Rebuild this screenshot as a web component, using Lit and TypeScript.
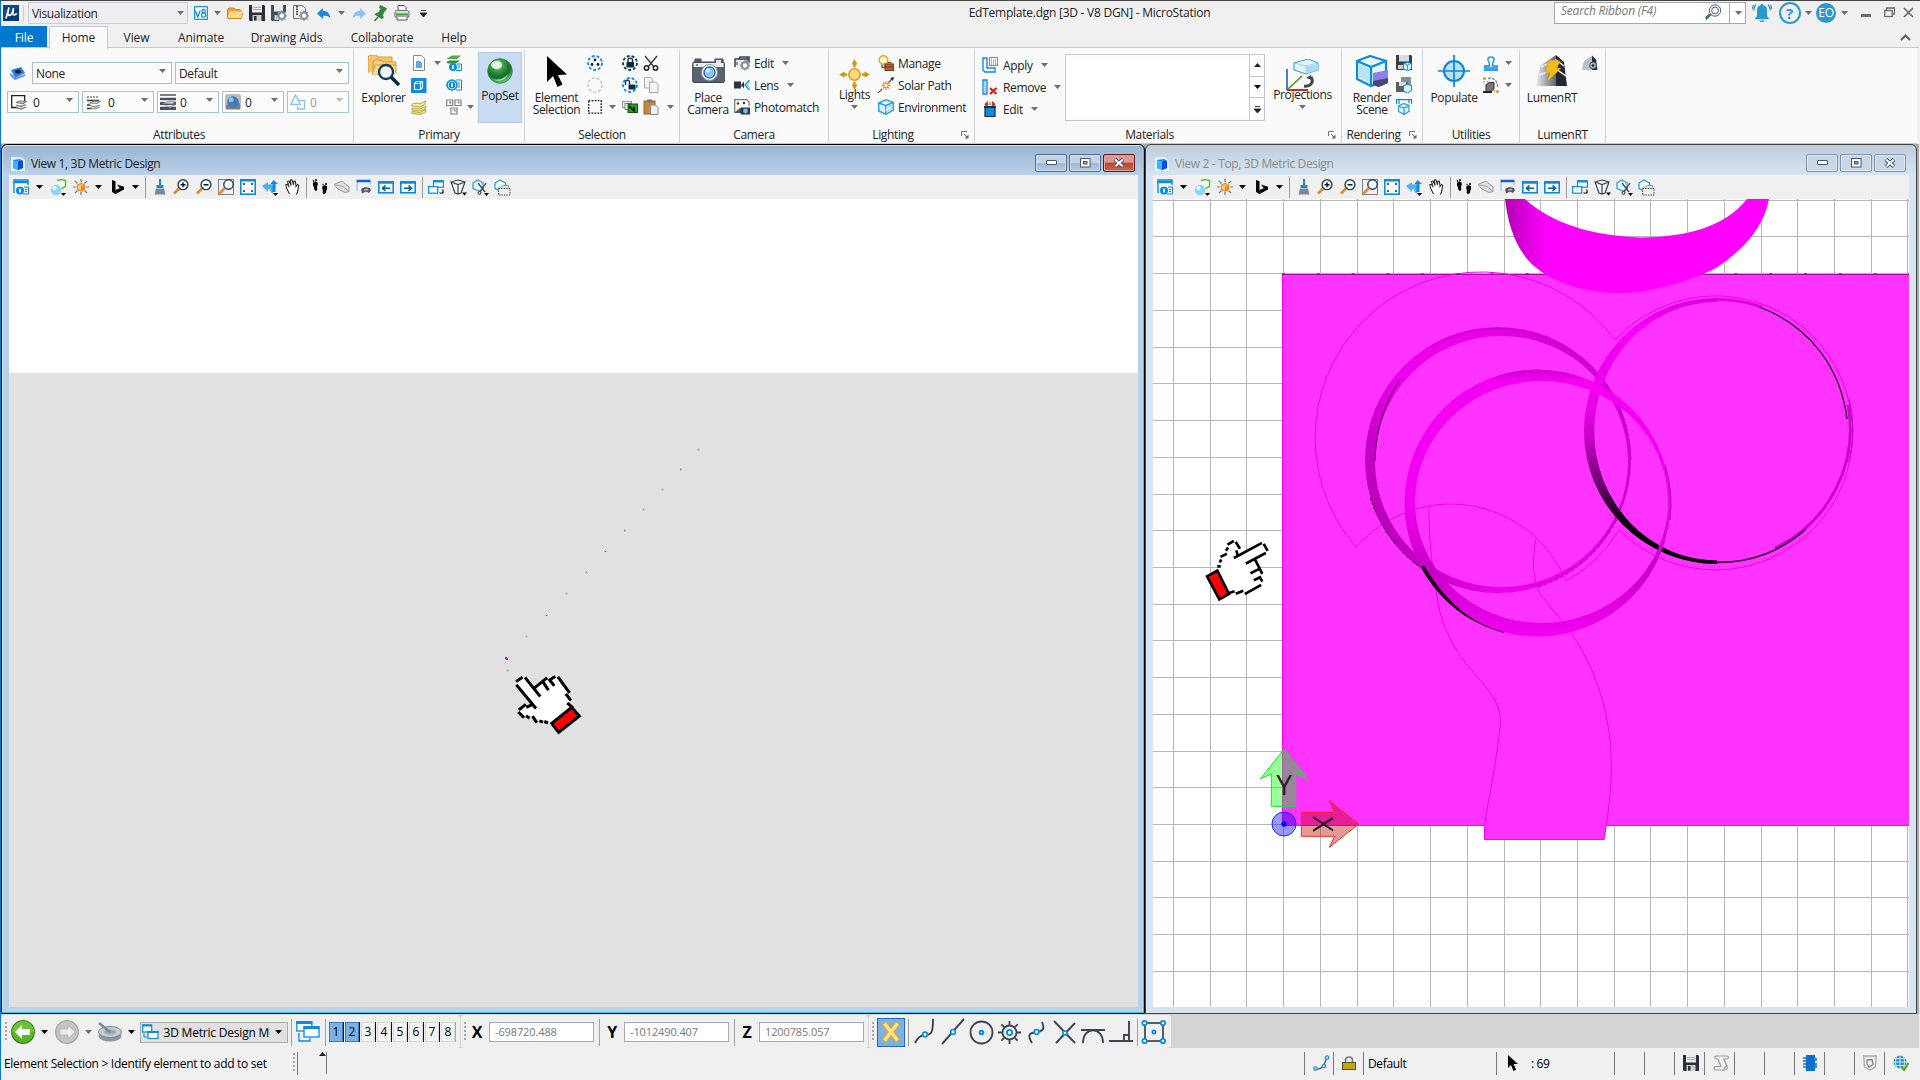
import { LitElement, html, svg, css } from "lit";
import { customElement, property } from "lit/decorators.js";

const B = "#0a8de0";
const D = "#3c4650";

/* Small icon library: [width, height, artwork] */
const ICONS: Record<string, [number, number, unknown]> = {
  logo: [16, 16, svg`<rect width="16" height="16" fill="#0b4a8a"/><path d="M0 16L16 3v13z" fill="#0d3a70"/><path d="M6 2.500L3 13.500M5.200 6c-.8 3-.2 4.300 1.500 4.300S9.500 8.500 10.500 3M10.300 5c-.8 3.500-.5 5 1 5s1.800-.8 2.300-2" fill="none" stroke="#fff" stroke-width="1.700"/>`],
  down: [7, 4, svg`<path d="M0 0h7L3.500 4z" fill="#6d6d6d"/>`],
  downB: [7, 4, svg`<path d="M0 0h7L3.500 4z" fill="#000"/>`],
  downL: [7, 4, svg`<path d="M0 0h7L3.500 4z" fill="#b8b8b8"/>`],
  up: [7, 4, svg`<path d="M0 4h7L3.500 0z" fill="#222"/>`],
  more: [7, 7, svg`<path d="M1 .5h5M0 3h7L3.500 7z" stroke="#222" fill="#222" stroke-width=".9"/>`],
  v8: [14, 14, svg`<rect x=".7" y=".7" width="12.600" height="12.600" fill="#fff" stroke="${B}" stroke-width="1.200"/><path d="M1.500 5l2.300 6 2.400-6.500" fill="none" stroke="${B}" stroke-width="1.300"/><circle cx="9.600" cy="5" r="1.700" fill="none" stroke="${B}" stroke-width="1.200"/><circle cx="9.600" cy="9" r="2.100" fill="none" stroke="${B}" stroke-width="1.200"/>`],
  folder: [16, 12, svg`<path d="M.5 11V2.500L2 1h5l1.500 1.500H13L14 4v1l1.500 1-1 5.500H1z" fill="#e3a93c" stroke="#c98a1e"/><path d="M2.500 4.500h13l-1.200 6.500H1z" fill="#fbd98a"/>`],
  save: [16, 16, svg`<path d="M0 0h15l1 1v15H1l-1-1z" fill="#2a2d33"/><rect x="3" y="0" width="10" height="7.500" fill="#e9ebee"/><path d="M4 2.500h8M4 4.500h8" stroke="#aab"/><rect x="3.500" y="10" width="9" height="6" fill="#c9ccd1"/><rect x="5" y="11" width="2.500" height="4.500" fill="#2a2d33"/>`],
  saveSet: [16, 16, svg`<path d="M0 0h15v7H8v9H1l-1-1z" fill="#4a4d53"/><rect x="3" y="0" width="9" height="6.500" fill="#e9ebee"/><rect x="3.500" y="10" width="5" height="5" fill="#c9ccd1"/><circle cx="10.800" cy="10.800" r="3.200" fill="#fff" stroke="#8090a3" stroke-width="2"/><path d="M10.800 5.500v10.500M5.500 10.800H16M7 7l7.600 7.600M14.600 7L7 14.600" stroke="#8090a3" stroke-width="1.300" stroke-dasharray="2.200 6.500"/>`],
  zip: [16, 16, svg`<path d="M.5.500h9l3 3v4M.5.500v13h6" fill="none" stroke="#6b6f77"/><path d="M4 1v9" stroke="#444" stroke-width="2" stroke-dasharray="1.500 1"/><circle cx="11" cy="10.800" r="3.200" fill="#fff" stroke="#8090a3" stroke-width="2"/><path d="M11 5.500v10.500M5.700 10.800H16M7.200 7l7.600 7.600M14.800 7l-7.600 7.600" stroke="#8090a3" stroke-width="1.300" stroke-dasharray="2.200 6.500"/>`],
  undo: [14, 11, svg`<path d="M0 5.500L6 0v3c4 0 6.500 1.500 7.500 7.500C11.500 8 9.500 7.500 6 8v3z" fill="#1b87dd"/>`],
  redo: [14, 11, svg`<path d="M14 5.500L8 0v3C4 3 1.500 4.500.5 10.500 2.500 8 4.500 7.500 8 8v3z" fill="#8cc4ea"/>`],
  pin: [14, 16, svg`<path d="M6 .5l6.500 3-1 2-1 .2-2 4.500.8 2-1.200 1.500L1 9.500l1.300-1.300 2-.2L7 4 5.700 2.500z" fill="#2f8a3c" stroke="#1f6a2c" stroke-width=".7"/><path d="M4 12l-3.500 4" stroke="#555" stroke-width="1.300"/>`],
  print: [16, 16, svg`<path d="M4 6V.5h6l2 2V6" fill="#fff" stroke="#555"/><path d="M1 7l1.500-1.500h11L15 7v5H1z" fill="#dcdfe3" stroke="#6b6f77"/><path d="M2 9.500h12" stroke="#3aa53a" stroke-width="2.200"/><path d="M3 12v3h10v-3" fill="#fff" stroke="#555"/>`],
  search: [17, 17, svg`<circle cx="10" cy="6.500" r="5.700" fill="none" stroke="#34607c"/><circle cx="10" cy="6.500" r="3.400" fill="none" stroke="#34607c"/><path d="M6 10.500L1 15.500M4.500 10L.5 14" stroke="#34607c" stroke-width="1.300"/>`],
  bell: [20, 20, svg`<path d="M10 1c1 0 1.500.5 1.500 1.200 2.500.8 3.500 2.500 3.500 5V13l2 2.500v.8H3v-.8L5 13V7.200c0-2.500 1-4.200 3.500-5C8.500 1.500 9 1 10 1zM7.500 17.500h5c-.5 2-4.500 2-5 0z" fill="#2b98d0"/><path d="M4 1.500C2.500 3 1.700 5 1.700 7.500M16 1.500c1.500 1.500 2.300 3.500 2.300 6M1.500 2C.7 3.500.5 5 .5 6M18.500 2c.8 1.500 1 3 1 4" fill="none" stroke="#2b98d0" stroke-width="1.200"/>`],
  min: [11, 10, svg`<rect y="6" width="10" height="3" fill="#6b6b6b"/>`],
  restore: [11, 11, svg`<path d="M2.500 3V1h8v6H8.500" fill="none" stroke="#6b6b6b" stroke-width="1.300"/><rect x=".7" y="3.500" width="7.500" height="6" fill="none" stroke="#6b6b6b" stroke-width="1.300"/>`],
  close: [11, 11, svg`<path d="M1 1l9 9M10 1l-9 9" stroke="#6b6b6b" stroke-width="1.700"/>`],
  chev: [11, 7, svg`<path d="M1 6l4.500-4.500L10 6" fill="none" stroke="#666" stroke-width="2.200"/>`],
  level: [16, 14, svg`<path d="M1 4l10-3 4 6-10 5z" fill="#2f7fe0"/><path d="M0 8l5 5 10-4" fill="none" stroke="#4a90e0" stroke-width="1.800"/><ellipse cx="8" cy="5.500" rx="3" ry="2" fill="#10204a"/>`],
  color: [16, 16, svg`<path d="M7 13.500H.7V1.700h13V7" fill="#fff" stroke="#222" stroke-width="1.300"/><path d="M5 8.500l4-1.500 6 .5-3 2zM5 11l5 1.500 5-2M5 13.500l5 1.500 5-2" fill="#ddd" stroke="#777" stroke-width="1.200"/>`],
  style: [16, 16, svg`<path d="M1 3h11" stroke="#444" stroke-dasharray="2 1"/><path d="M1 6.500h12M1 14.500h5M1 11h3" stroke="#333" stroke-width="1.300"/><path d="M4 9l4-2 6 .5-3 2zM4 11.500l5 1.500 5-2M4 14l5 1 5-2" fill="#ddd" stroke="#888" stroke-width="1.200"/>`],
  weight: [16, 16, svg`<path d="M0 1h16" stroke="#4a5460" stroke-width="1.500"/><path d="M0 5h16" stroke="#4a5460" stroke-width="2.500"/><path d="M0 9.500h16" stroke="#4a5460" stroke-width="3"/><path d="M0 14.500h16" stroke="#4a5460" stroke-width="3.500"/><path d="M5 9l4-2 6 .5-3 2zM5 11.500l5 1.500 5-2" fill="#ddd" stroke="#aaa" stroke-width="1.300"/>`],
  mat: [16, 16, svg`<rect width="16" height="16" rx="2" fill="#b9bdc2"/><path d="M1 11l14-2v6H1z" fill="#7a8088"/><circle cx="8" cy="8" r="5.800" fill="#3f7fb8"/><circle cx="6.200" cy="5.800" r="2.500" fill="#8fc0e6"/>`],
  prio: [16, 16, svg`<path d="M5.500 1L.8 10.500h9.500z" fill="none" stroke="#8cc4ea" stroke-width="1.400"/><path d="M7 6.500h7.500V15h-7v-3" fill="none" stroke="#8cc4ea" stroke-width="1.300"/>`],
  explorer: [32, 32, svg`<path d="M0 18V2l2-2h6l2 2h14v6" fill="#f5c56b" stroke="#d49a35"/><path d="M5 20V7l2-2h6l2 2h13l-1 11z" fill="#f9cf7f" stroke="#d49a35"/><path d="M4 20L7 10h21v8" fill="#fbdb98" stroke="#d49a35"/><circle cx="18" cy="17" r="7" fill="#f4f6fa" stroke="#103c5c" stroke-width="2.300"/><path d="M23 22l8 8" stroke="#0c2c44" stroke-width="3.500"/>`],
  doc: [16, 16, svg`<path d="M2.500.500h8l3 3v12h-11z" fill="#fff" stroke="#888"/><path d="M5 6h4l2 2v5H5z" fill="#5ba9e0"/>`],
  cube: [16, 15, svg`<rect width="15.500" height="15" rx="1" fill="#0a8de0"/><path d="M3.500 5.500h6v6h-6zM3.500 5.500l2-2h6v6l-2 2M9.500 5.500l2-2" fill="none" stroke="#fff" stroke-width="1.100"/>`],
  layers: [16, 15, svg`<path d="M1 4l4-1 3 1 7-3-2 4-4 2-8-1z" fill="#fbf09a" stroke="#a89a3a" stroke-width=".9"/><path d="M1 8l8 1 6-3-1 3-5 2-8-1zM1 11.500l8 1 6-3-1 3-5 2-8-1z" fill="#fbf09a" stroke="#a89a3a" stroke-width=".9"/>`],
  levinfo: [16, 16, svg`<path d="M0 4l6-3.500h9L11 4z" fill="#4aae4a"/><path d="M0 7l4-1.500h10L10 8.500H2z" fill="#388a38"/><circle cx="7" cy="12" r="4" fill="${B}"/><path d="M7 10v4" stroke="#fff" stroke-width="1.600"/><path d="M11 9h4.500v6.500H10M12 11h2M12 13h2" fill="none" stroke="${B}"/>`],
  info: [16, 14, svg`<circle cx="6" cy="7" r="5" fill="none" stroke="${B}" stroke-width="1.600"/><circle cx="6" cy="7" r="3.400" fill="${B}"/><path d="M6 5v4" stroke="#fff" stroke-width="1.500"/><path d="M10 2h5.500v10H10M12 5h2M12 7h2M12 9h2" fill="none" stroke="${B}"/>`],
  keys: [16, 16, svg`<path d="M.7 1h6v5.500h-6zM9 1h6v5.500H9zM5 9h6v6H5z" fill="#fff" stroke="#7a828c" stroke-width="1.200"/><path d="M3 3h1.500v1.500M11.500 3H13v1.500M7.500 11H9v1.500" fill="none" stroke="#555"/>`],
  sphere: [26, 26, svg`<defs><radialGradient id="g" cx=".4" cy=".25" r=".8"><stop offset="0" stop-color="#e8f8e8"/><stop offset=".3" stop-color="#3aa04a"/><stop offset=".65" stop-color="#136a2a"/><stop offset="1" stop-color="#7be08a"/></radialGradient></defs><circle cx="13" cy="13" r="12.300" fill="url(#g)" stroke="#1e8a34" stroke-width=".8"/><ellipse cx="9.500" cy="7" rx="5.500" ry="4" fill="#fff" opacity=".75"/><path d="M6 21c6 4 13 1 15-5-3 4-9 7-15 5z" fill="#c8f7c8" opacity=".8"/>`],
  arrowBig: [20, 31, svg`<path d="M0 0v26l6-6 4.500 11 5-2.500L11 19l9-.5z"/>`],
  selAll: [16, 16, svg`<circle cx="8" cy="8" r="7" fill="none" stroke="${B}" stroke-width="1.800" stroke-dasharray="3 1.900"/><circle cx="8" cy="5" r="1.400" fill="#0c2c44"/><circle cx="5" cy="9.500" r="1.400" fill="#0c2c44"/><circle cx="11" cy="9.500" r="1.400" fill="#0c2c44"/>`],
  selNone: [16, 16, svg`<circle cx="8" cy="8" r="7" fill="none" stroke="#b4bcc4" stroke-width="1.200" stroke-dasharray="3 1.900"/>`],
  marquee: [14, 14, svg`<rect x=".7" y=".7" width="12.500" height="12.500" fill="none" stroke="#111" stroke-width="1.300" stroke-dasharray="1.700 1.300"/>`],
  lockSel: [16, 16, svg`<circle cx="8" cy="8" r="7" fill="none" stroke="#0c3c5c" stroke-width="1.800" stroke-dasharray="3 1.900"/><rect x="4.500" y="7" width="7.500" height="5.500" fill="#0c2c44"/><path d="M6 7.500V5c0-2.500 4.500-2.500 4.500 0v2.500" fill="none" stroke="#0c2c44" stroke-width="1.400"/>`],
  unlockSel: [16, 16, svg`<circle cx="8" cy="8" r="7" fill="none" stroke="${B}" stroke-width="1.800" stroke-dasharray="3 1.900"/><rect x="6.500" y="7.500" width="7" height="5" fill="#0c2c44"/><path d="M3.500 8V5c0-2.500 4-2.500 4 0v2.500" fill="none" stroke="#0c2c44" stroke-width="1.400"/>`],
  replace: [16, 12, svg`<rect x=".5" y=".5" width="9" height="6" fill="#eee" stroke="#999"/><rect x="3" y="2.500" width="6" height="6" fill="#fff" stroke="#4a4"/><rect x="6" y="3" width="9.500" height="8.500" fill="#1fa01f" stroke="#0a5a0a"/><path d="M7 5l5 5V6" stroke="#000" stroke-width="1.500" fill="none"/>`],
  cut: [16, 16, svg`<path d="M2 1l9 11M14 1L5 12" stroke="#333" stroke-width="1.300"/><circle cx="3.500" cy="13" r="2.200" fill="none" stroke="#222" stroke-width="1.500"/><circle cx="12.500" cy="13" r="2.200" fill="none" stroke="#222" stroke-width="1.500"/>`],
  copy: [16, 16, svg`<path d="M1.500.500h6l2 2V11h-8z" fill="#f4f4f4" stroke="#aaa"/><path d="M6.500 5h6l2.500 2.500v8H6.500z" fill="#f4f4f4" stroke="#aaa"/>`],
  paste: [16, 16, svg`<rect x="1" y="2" width="11" height="13" fill="#c4883c" stroke="#9a6420"/><rect x="4" y=".5" width="5" height="3" fill="#777"/><path d="M7.500 6h5l2.500 2.500v7H7.500z" fill="#f0f0f0" stroke="#888"/>`],
  camera: [33, 26, svg`<path d="M3 4V1h6v3M23 4V1h8v4" fill="#5a626c" stroke="#404850"/><rect x=".7" y="4" width="31.600" height="20.500" rx="1.500" fill="#5b636e" stroke="#3c444c"/><path d="M1.500 5h30v4h-30z" fill="#e8eaec"/><rect x="24" y="2" width="5" height="3" fill="#dfe6ee"/><rect x="4" y="6" width="2" height="2" fill="#6ab04a"/><circle cx="17.500" cy="14.500" r="8" fill="#eef1f4" stroke="#8a929a"/><circle cx="17.500" cy="14.500" r="5.500" fill="#8dc8f0" stroke="#2c6ca0" stroke-width="1.300"/><circle cx="15.800" cy="12.500" r="2" fill="#dff1ff"/>`],
  camEdit: [16, 16, svg`<path d="M1 12V4h4L6 2h9v6M1 4h14" fill="#e8eaec" stroke="#3c444c" stroke-width="1.500"/><path d="M3 7v3M13 2v5" stroke="#3c444c"/><circle cx="11" cy="10.500" r="3.200" fill="#fff" stroke="#8090a3" stroke-width="2"/><path d="M11 5v11M6 10.500h10M7.500 7l7 7M14.500 7l-7 7" stroke="#8090a3" stroke-width="1.300" stroke-dasharray="2.200 6"/>`],
  lens: [16, 10, svg`<path d="M0 1.500h7v7H0z" fill="#2c343c"/><path d="M7 5l3-3.500v7z" fill="#2c343c"/><path d="M15.500 0L11 5l4.500 5" fill="none" stroke="${B}" stroke-width="1.300"/><path d="M15.500 2.500L13 5l2.500 2.500" fill="none" stroke="#8cc4ea"/>`],
  photo: [16, 16, svg`<path d="M.7 14V.7h12L15 3v4" fill="#fff" stroke="#6b7480" stroke-width="1.200"/><path d="M1 13l5-4 3 2v3H1z" fill="#555"/><circle cx="4" cy="4.500" r="1.200" fill="#333"/><circle cx="10" cy="4" r="1.200" fill="#333"/><rect x="6.500" y="8.500" width="9.500" height="7" fill="#2c3a48"/><circle cx="11.500" cy="12" r="2.400" fill="#6fc0f0"/>`],
  lights: [31, 31, svg`<path d="M15.500 4v23M4 15.500h23" stroke="#cf9410" stroke-width="2.400"/><path d="M15.500 0l3 5.500h-6zM15.500 31l3-5.500h-6zM0 15.500l5.500-3v6zM31 15.500l-5.500-3v6z" fill="#cf9410"/><circle cx="15.500" cy="15.500" r="7.500" fill="#fafafa"/><circle cx="15.500" cy="15.500" r="5.700" fill="#fbd97a" stroke="#d49a2a" stroke-width="1.500"/>`],
  manage: [16, 16, svg`<circle cx="5.500" cy="5" r="4.300" fill="#fff7d0" stroke="#e0ad20" stroke-width="1.600"/><path d="M4 9.500v3h3v-3" fill="none" stroke="#555" stroke-width="1.300"/><rect x="7" y="9" width="9" height="6.500" fill="#b0623a" stroke="#7a3a1a"/><path d="M10 9V7.500h3V9M7 12h9" fill="none" stroke="#7a3a1a"/>`],
  solar: [16, 16, svg`<path d="M0 16L4 12M10 6l5-5" stroke="#555" stroke-width="1.200"/><path d="M16 0l-4 1 3 3z" fill="#333"/><path d="M8 4v9M3.500 8.500h9M5 5.500l6 6M11 5.500l-6 6" stroke="#f08a2a" stroke-width="1.300"/><circle cx="8" cy="8.500" r="1.500" fill="#fff"/>`],
  env: [16, 16, svg`<path d="M.7 4L8 .7 15.300 3.500V11L8 15.300.7 12zM.7 4l7 2.500 7.600-3M7.700 6.500v8.500" fill="#d9f0fd" stroke="#28a0dc" stroke-width="1.400"/><path d="M8 9l5-3v4l-5 3z" fill="#f4fbff" stroke="#7cc4ea" stroke-width=".8"/>`],
  launcher: [8, 8, svg`<path d="M.5 5V.500H6" fill="none" stroke="#777"/><path d="M3 3l3 3" stroke="#666"/><path d="M7.500 3.500v4h-4z" fill="#666"/>`],
  apply: [16, 16, svg`<path d="M1 1h4v10h8v4H3L1 13z" fill="#fff" stroke="${B}" stroke-width="1.400"/><rect x="7.500" y=".5" width="8" height="8" fill="#fff" stroke="#888"/><path d="M9 3h5M9 5h5M9 7h5" stroke="#666" stroke-dasharray="1 1"/>`],
  remove: [16, 16, svg`<path d="M1 1h4v14H1z" fill="#d6ecfb" stroke="${B}" stroke-width="1.300"/><path d="M3 2v12" stroke="${B}" stroke-dasharray="1 1.500"/><path d="M8 9l6.500 6M14.500 9L8 15" stroke="#d82020" stroke-width="2.300"/>`],
  brushes: [16, 16, svg`<path d="M3 4l2-2v3M11 5V2l2 2" stroke="#c03020" stroke-width="1.800" fill="none"/><path d="M8 0l1.500 4h-3z" fill="#f08a2a"/><path d="M3 6h10v9.500H3z" fill="${B}" stroke="#1c2c3c" stroke-width="1.200"/><path d="M2 6h12" stroke="#1c2c3c" stroke-width="2"/>`],
  proj: [34, 32, svg`<path d="M8 4l14-4 10 4v7l-12 4-12-4z" fill="#e6f5fd" stroke="#28a0dc"/><path d="M8 4l12 3 12-3M20 7v8" fill="none" stroke="#28a0dc" opacity=".4"/><path d="M20 8l12-3v6l-12 4z" fill="#a8daf5"/><path d="M1 10v21" stroke="#1465b4" stroke-width="1.600"/><path d="M1 31h21" stroke="#c81414" stroke-width="1.800"/><path d="M2 30l14-13" stroke="#4a9a1a" stroke-width="1.600"/><path d="M18 27c7 1 10-4 7-9" fill="none" stroke="#3c444c" stroke-width="3"/><path d="M20 19l5-3 1 5z" fill="#3c444c"/>`],
  render: [32, 32, svg`<path d="M1 6L14 1l16 5v19L15 31 1 24z" fill="#e8f5fd" stroke="${B}" stroke-width="2.300"/><path d="M1 6l14 6 15-6M15 12v19" fill="none" stroke="${B}" stroke-width="2.300"/><path d="M3 9l10 4.500v14L3 22z" fill="#b8e2f8"/><path d="M17 18l15-3v13l-10 4-5-2z" fill="#8a80e8"/><path d="M17 26l15-3v5l-9 4-6-2z" fill="#4a4478"/>`],
  saveImg: [16, 16, svg`<path d="M0 0h15l1 1v14H1l-1-1z" fill="#3a3d43"/><rect x="3" y="0" width="10" height="6.500" fill="#d9dbde"/><rect x="2" y="10" width="5" height="4" fill="#c9ccd1"/><path d="M7.500 8.500l4-1 4 1v5l-4 2.500-4-2z" fill="#d9f0fd" stroke="${B}"/><path d="M7.500 8.500l4 1.500 4-1.500M11.500 10v5" stroke="${B}" fill="none" stroke-width=".8"/>`],
  saveImgs: [16, 16, svg`<path d="M5 0h10v9H5z" fill="#8a8d93"/><path d="M0 5h12v10H0z" fill="#5a5d63"/><rect x="3" y="5" width="7" height="4" fill="#d9dbde"/><path d="M7.500 8.500l4-1 4 1v5l-4 2.500-4-2z" fill="#d9f0fd" stroke="${B}"/>`],
  renderBox: [16, 16, svg`<path d="M.5 5V.700h15V5M3 1v4M13 1v3" fill="none" stroke="${B}" stroke-width="1.200"/><path d="M2.500 7l5-2.500L13 6.500v6L8 15.500l-5.500-3zM2.500 7L8 9l5-2.500M8 9v6" fill="#d9f0fd" stroke="#28a0dc" stroke-width="1.200"/>`],
  target: [32, 32, svg`<circle cx="16" cy="16" r="10" fill="#b8e0f8" stroke="#0a85d8" stroke-width="2"/><path d="M16 0v32M0 16h32" stroke="#0a85d8" stroke-width="1.700"/>`],
  stamp: [14, 15, svg`<path d="M7 .8c4 0 3.500 4 2 5.500L8.500 10h4.700v2H.8v-2h4.700L5 6.300C3.500 4.800 3 .8 7 .8z" fill="#f2fafe" stroke="${B}" stroke-width="1.300"/><path d="M0 14h14" stroke="${B}" stroke-width="1.700"/>`],
  xform: [16, 16, svg`<path d="M5 1.500c6-1.500 10 3 9.500 9" fill="none" stroke="#888" stroke-width="1.300" stroke-dasharray="3 1"/><path d="M3 8l3-2.500h5V12l-3 2.500H3z" fill="#777" stroke="#333"/><path d="M0 15h9" stroke="#222" stroke-width="2"/><circle cx="1.500" cy="1.500" r="1.500" fill="#f08a2a"/><circle cx="14.500" cy="14.500" r="1.500" fill="#f08a2a"/><path d="M1 4v3M4 5h3M11 14h2" stroke="#f08a2a" stroke-width="1.300" stroke-dasharray="1.500 1"/>`],
  lumen: [32, 32, svg`<defs><linearGradient id="lg" x1="0" x2="1"><stop offset="0" stop-color="#e9ecef"/><stop offset="1" stop-color="#5a6672"/></linearGradient></defs><path d="M4 11L20 0v31H0z" fill="url(#lg)"/><path d="M20 0l8 7 3 24H20z" fill="#252a30"/><path d="M5 12l15-7 8 6M3 20l17-6 10 7" fill="none" stroke="#fff" stroke-width="1.300"/><path d="M13 5l11 1-3 7h4L11 27l3-9-5-1z" fill="#f2bd1c" stroke="#c8920a" stroke-width=".6"/>`],
  lumenS: [16, 16, svg`<path d="M2 6l8-5.500V15H0z" fill="#b9c0c8"/><path d="M10 .5l4 4 1.500 10.500H10z" fill="#252a30"/><circle cx="11" cy="10.500" r="3.400" fill="#aab4be" stroke="#4a5560"/><circle cx="11" cy="10.500" r="1.300" fill="#223"/>`],
  view: [14, 15, svg`<path d="M0 1h10l4 3v11H0z" fill="#dff0fb"/><path d="M2 4l7-1 3 2v7l-5 2-5-2z" fill="#1a8af0"/><path d="M2 4l5 1.500V14l-5-2z" fill="#3ab4ff"/><path d="M7 5.500l5-1v7.500L7 14z" fill="#0a4ae0"/>`],
  vinfo: [16, 16, svg`<path d="M1 14V1h14v5" fill="#fff" stroke="${B}" stroke-width="1.400"/><path d="M.5 3h15" stroke="${B}" stroke-width="2.500"/><circle cx="7" cy="11.500" r="4" fill="${B}"/><path d="M7 9.500v4" stroke="#fff" stroke-width="1.600"/><path d="M11 8h4.500v7H10M12 10.500h2M12 12.500h2" fill="none" stroke="${B}"/>`],
  display: [17, 17, svg`<path d="M7 1.500l4-1 4.500 1v6l-4 2" fill="#f4fff0" stroke="#5ac02a" stroke-width="1.400"/><circle cx="6" cy="11" r="5.300" fill="#8ed4f4"/><circle cx="4.500" cy="9" r="2.200" fill="#e8f8ff"/><path d="M11 14h5l-2.500 3z" fill="#000"/>`],
  sun: [16, 16, svg`<path d="M8 0v3M8 13v3M0 8h3M13 8h3M2 2l2.500 2.500M14 2l-2.500 2.500M2 14l2.500-2.500M14 14l-2.500-2.500" stroke="#777" stroke-width="1.200"/><path d="M4.500 6L8 4.500 11.500 6v4.500L8 12l-3.500-1.500z" fill="#fbc98a" stroke="#f08a1a" stroke-width="1.200"/><path d="M8 7.500L11.500 6v4.500L8 12z" fill="#f08a1a"/>`],
  bing: [12, 14, svg`<path d="M0 0l3.500 1.300V10L12 6.500v3L3.500 14 0 12zM5 4.500l7 2.300-4 1.700z"/>`],
  brush: [12, 16, svg`<path d="M6 0v6" stroke="#1e88d2" stroke-width="2"/><path d="M2.500 6h7v3h-7z" fill="#1e88d2"/><path d="M2 9.500h8l1.500 6H.5z" fill="#7b8794"/>`],
  zin: [16, 16, svg`<path d="M6 9.500L1 14.500" stroke="#e08a2a" stroke-width="2.600"/><circle cx="10" cy="5.700" r="4.900" fill="#fff" stroke="#1c4058" stroke-width="1.400"/><path d="M7.500 5.700h5M10 3.200v5" stroke="#111" stroke-width="1.400"/>`],
  zout: [16, 16, svg`<path d="M6 9.500L1 14.500" stroke="#e08a2a" stroke-width="2.600"/><circle cx="10" cy="5.700" r="4.900" fill="#fff" stroke="#1c4058" stroke-width="1.400"/><path d="M7.500 5.700h5" stroke="#111" stroke-width="1.400"/>`],
  zwin: [16, 16, svg`<rect x=".5" y=".5" width="15" height="15" fill="none" stroke="#111" stroke-dasharray="1 1"/><path d="M6.500 9.500l-5 5" stroke="#e08a2a" stroke-width="2.600"/><circle cx="10.500" cy="5.500" r="4.700" fill="#fff" stroke="#1c4058" stroke-width="1.400"/>`],
  fit: [16, 16, svg`<rect x=".8" y=".8" width="14.400" height="14.400" fill="#fff" stroke="${B}" stroke-width="1.600"/><path d="M0 1.500h16" stroke="${B}" stroke-width="2"/><circle cx="4" cy="5" r="1.100" fill="#28384a"/><circle cx="12" cy="5" r="1.100" fill="#28384a"/><circle cx="4" cy="12" r="1.100" fill="#28384a"/><circle cx="12" cy="12" r="1.100" fill="#28384a"/>`],
  rotate: [17, 17, svg`<path d="M0 7l6-4v2.500c4-1 7 0 8 3L11 9v6l-3-3v-2c-1 0-1 0-2 .5V13z" fill="#56b0e8"/><path d="M11.500 1L16 5h-2.500v8h-3V5H8.500z" fill="${B}"/><path d="M11 14h5l-2.500 3z" fill="#000"/>`],
  hand: [15, 16, svg`<path d="M4.500 15L1.500 9 .8 5.500l1.500-.2L4 8 2.500 2.500 4 2l2 4.500L5.500 1 7 .8 8.500 6 9 2l1.400.2.600 5.300 1.500-2 1.200.7L13 11l-1.500 4.500" fill="#fff" stroke="#333" stroke-width="1.100"/>`],
  feet: [16, 16, svg`<path d="M.8 5c0-3 5-3.500 5 0 0 2-1.500 3-.5 5 .4 2.400-3 2.400-3 0 0-2-1.500-3-1.500-5zM15.200 8.500c0-3-5-3-5 0 0 1.700 1.200 2.500.5 4.500-.4 2.400 3 2.600 3.300.2.200-1.700 1.200-2.700 1.200-4.700z"/><path d="M1 2.500l1-1M3 1h2M10.500 5.500h1M13 5h2" stroke="#000" stroke-width="1.600"/>`],
  fly: [16, 12, svg`<path d="M0 3.500L8 0l7 6v4.500l-4 1L4 8z" fill="#e0e0e0" stroke="#999"/><path d="M0 3.500l9 2 6 5" fill="none" stroke="#aaa"/>`],
  navwin: [16, 16, svg`<path d="M1 12.500V2.500h13v4" fill="#eef4ff" stroke="#8ab0f0"/><path d="M.5 2h14" stroke="#1a5ae0" stroke-width="2.500"/><path d="M5 10l4-2 5 1 1 2-2 3-3-1.500-4 2z" fill="#556"/><path d="M8 11l4-.5" stroke="#ddd"/>`],
  prev: [16, 13, svg`<rect x=".8" y=".8" width="14.400" height="11" fill="#fff" stroke="${B}" stroke-width="1.600"/><path d="M0 1.500h16" stroke="${B}" stroke-width="2.500"/><path d="M4 7.300h8M7.500 4.500L4.500 7.300l3 2.700" stroke="#0a5a94" stroke-width="1.600" fill="none"/>`],
  next: [16, 13, svg`<rect x=".8" y=".8" width="14.400" height="11" fill="#fff" stroke="${B}" stroke-width="1.600"/><path d="M0 1.500h16" stroke="${B}" stroke-width="2.500"/><path d="M4 7.300h8M8.500 4.500l3 2.800-3 2.700" stroke="#0a5a94" stroke-width="1.600" fill="none"/>`],
  copyview: [16, 15, svg`<rect x="5.500" y=".7" width="10" height="6.500" fill="#fff" stroke="${B}" stroke-width="1.200"/><path d="M5 1.500h11M0 7h10" stroke="${B}" stroke-width="2"/><rect x=".7" y="6.700" width="9" height="6.500" fill="#fff" stroke="${B}" stroke-width="1.200"/><path d="M11.500 13h3.500V9.500" fill="none" stroke="#111" stroke-width="1.200"/>`],
  clip: [17, 17, svg`<path d="M1 3l7-2 7 2-4 11-3 1-3-1zM1 3l7 2.500L15 3M8 5.500V15" fill="#f4f6f8" stroke="#3c4650" stroke-width="1.200"/><path d="M12 13.500h5l-2.500 3z" fill="#000"/>`],
  clipV: [17, 17, svg`<path d="M1 4l5-3 5 3v6l-4 2-6-2.500z" fill="#f2fafe" stroke="#28a0dc" stroke-width="1.300"/><path d="M6 4l7 9M14 4l-6 9" stroke="#444" stroke-width="1.300"/><circle cx="7.500" cy="14" r="1.500" fill="none" stroke="#333"/><path d="M12 14h5l-2.500 3z" fill="#000"/>`],
  clipM: [17, 17, svg`<path d="M1 4l5-3 5.500 3v6L6 12l-5-2.500z" fill="#f2fafe" stroke="#28a0dc" stroke-width="1.300"/><path d="M5.500 9.500l4-3h5v2" fill="#eee" stroke="#888"/><path d="M4.500 9.500h11.500v6.500H4.500z" fill="#f0f0f0" stroke="#444" stroke-dasharray="1.500 1"/>`],
  back: [24, 24, svg`<circle cx="12" cy="12" r="11.300" fill="#5cb42a" stroke="#3c8414" stroke-width="1.300"/><path d="M1 12a11 11 0 0 1 22 0z" fill="#7acb44" opacity=".6"/><path d="M4 12l7-7v4h8v6h-8v4z" fill="#fff"/>`],
  fwd: [24, 24, svg`<circle cx="12" cy="12" r="11.300" fill="#c4c4c4" stroke="#a8a8a8" stroke-width="1.300"/><path d="M20 12l-7-7v4H5v6h8v4z" fill="#ececec" stroke="#aaa" stroke-width=".6"/>`],
  disc: [25, 20, svg`<ellipse cx="13" cy="14" rx="11.500" ry="5.500" fill="#8a97a3"/><ellipse cx="13" cy="10" rx="11.500" ry="5.500" fill="#c4ccd4" stroke="#7c8894"/><ellipse cx="13" cy="10" rx="6" ry="2.500" fill="#98a4b0"/><path d="M2 1l11 9" stroke="#7c8894" stroke-width="2.500"/>`],
  models: [17, 16, svg`<rect x=".7" y="1" width="9" height="7" fill="#fff" stroke="${B}" stroke-width="1.200"/><rect x="6" y="7.500" width="10" height="7" fill="#fff" stroke="${B}" stroke-width="1.200"/><path d="M0 1.500h10M5.500 8H16.500" stroke="${B}" stroke-width="2.200"/><path d="M2 9v4h3" fill="none" stroke="${B}"/>`],
  modelsL: [24, 22, svg`<rect x=".8" y="1" width="15" height="9" fill="#fff" stroke="${B}" stroke-width="1.300"/><rect x="8" y="6" width="15" height="10" fill="#fff" stroke="${B}" stroke-width="1.300"/><path d="M0 1.500h16.500M7.500 6.500h16" stroke="${B}" stroke-width="3"/><path d="M3 12v8h11v-3" fill="none" stroke="${B}" stroke-width="1.300"/>`],
  xOn: [22, 22, svg`<path d="M4 2l14 18M18 2L4 20" stroke="#e8a81c" stroke-width="5.500"/><path d="M4.500 2.600l13 16.800M17.500 2.600l-13 16.800" stroke="#ffe48c" stroke-width="3.300"/>`],
  s1: [22, 30, svg`<path d="M1 26c3-6 6-8 10-8 7 0 8-3 8-16" fill="none" stroke="${D}" stroke-width="1.900"/><circle cx="11" cy="17.500" r="2.300" fill="#fff" stroke="${B}" stroke-width="1.700"/>`],
  s2: [24, 30, svg`<path d="M1 27L23 2" stroke="${D}" stroke-width="1.900"/><circle cx="12" cy="15" r="2.300" fill="#fff" stroke="${B}" stroke-width="1.700"/>`],
  s3: [25, 25, svg`<circle cx="12.500" cy="12.500" r="11" fill="none" stroke="${D}" stroke-width="1.800"/><circle cx="12.500" cy="12.500" r="1.800" fill="#fff" stroke="${B}" stroke-width="2"/>`],
  s4: [25, 25, svg`<circle cx="12.500" cy="12.500" r="7" fill="none" stroke="${D}" stroke-width="1.800"/><path d="M12.500 1v4M12.500 20v4M1 12.500h4M20 12.500h4M4.400 4.400l2.800 2.800M17.800 17.800l2.800 2.800M20.600 4.400l-2.800 2.800M7.200 17.800l-2.800 2.800" stroke="${D}" stroke-width="1.800"/><circle cx="12.500" cy="12.500" r="2.600" fill="#fff" stroke="${B}" stroke-width="1.900"/>`],
  s5: [20, 24, svg`<path d="M5 23C-1 13 4 13 10 12s8-3 5-10" fill="none" stroke="${D}" stroke-width="1.900"/><circle cx="9.500" cy="12" r="2.300" fill="#fff" stroke="${B}" stroke-width="1.700"/>`],
  s6: [24, 24, svg`<path d="M1 1l21 22M22 3L3 23" stroke="${D}" stroke-width="1.900"/><circle cx="12" cy="13" r="2" fill="#fff" stroke="${B}" stroke-width="1.700"/>`],
  s7: [24, 24, svg`<path d="M0 10h24M2 23c0-17 20-17 20 0" fill="none" stroke="${D}" stroke-width="1.900"/>`],
  s8: [24, 24, svg`<path d="M20 1v20M0 21h24M15 20v-5h5" fill="none" stroke="${D}" stroke-width="1.900"/>`],
  s9: [26, 26, svg`<rect x="4" y="4" width="18" height="18" fill="none" stroke="${D}" stroke-width="1.700"/><g fill="#fff" stroke="${B}" stroke-width="1.800"><circle cx="3.500" cy="4" r="2.200"/><circle cx="22" cy="4" r="2.200"/><circle cx="3.500" cy="22" r="2.200"/><circle cx="22" cy="22" r="2.200"/><circle cx="13" cy="13" r="1.600"/></g>`],
  snap: [17, 16, svg`<path d="M2 14c7 1 9-3 12-12" fill="none" stroke="#555" stroke-width="1.200"/><g fill="#fff" stroke="${B}" stroke-width="1.200"><circle cx="2.500" cy="13.500" r="1.700"/><circle cx="11" cy="11" r="1.700"/><circle cx="14" cy="2.500" r="1.700"/></g>`],
  lock: [14, 14, svg`<path d="M3.500 7V4c0-4 7-4 7 0v3" fill="none" stroke="#777" stroke-width="1.700"/><rect x=".5" y="6.500" width="13" height="7" fill="#b8a820" stroke="#5a5210"/>`],
  arrow: [11, 16, svg`<path d="M0 0v13l3-3 2.500 6 2.500-1.300L5.700 9H10z"/>`],
  scroll: [16, 16, svg`<path d="M3.500 1H14c2 0 1.500 3 0 3h-3l3 7.500M3.500 1C1 1 1.500 4 3.500 4H5l3 7.500H2.500c-2 0-2 3.500 0 3.500H12c3 0 3-3.500 1-3.500-2 0-2 3.500-1 3.500" fill="none" stroke="#999" stroke-width="1.200"/>`],
  note: [15, 16, svg`<rect x="3" y="0" width="9" height="16" fill="#0a72c8"/><path d="M0 3h3M0 6h3M0 9h3M0 12h3M13 3v3M13 8v5" stroke="#0a72c8" stroke-width="1.500"/>`],
  shield: [14, 16, svg`<path d="M.7 1h12.600l-1 11L7 15l-5.500-3z" fill="#eee" stroke="#aaa" stroke-width="1.300"/><path d="M4 5l5-.5 1 5L6 12 4 9z" fill="none" stroke="#888" stroke-width="1.300"/>`],
  globe: [16, 16, svg`<circle cx="7" cy="7" r="6.500" fill="#2a8ccc"/><path d="M0 7h14M7 0v14M1.500 3.500h11M1.500 10.500h11M4 1C2 5 2 9 4 13M10 1c2 4 2 8 0 12" fill="none" stroke="#e4f3fc" stroke-width=".9"/><path d="M8.500 11.500l2.500 3.500 4.500-7" fill="none" stroke="#5aa81a" stroke-width="2.200"/>`],
  wmin: [11, 6, svg`<rect x=".5" y=".5" width="10" height="4" rx=".5" fill="#fff" stroke="#4c5669"/>`],
  wmax: [11, 10, svg`<rect x=".5" y=".5" width="9.500" height="8.500" fill="#fff" stroke="#4c5669"/><rect x="3.500" y="3.500" width="3.500" height="2.500" fill="#9ab" stroke="#4c5669"/>`],
  wx: [12, 10, svg`<path d="M2 1.500l8 7M10 1.500l-8 7" stroke="#4c5669" stroke-width="4"/><path d="M2.300 1.700l7.400 6.600M9.700 1.700L2.300 8.300" stroke="#fff" stroke-width="2"/>`],
};

const ic = (n: string) => {
  const [w, h, art] = ICONS[n];
  return html`<svg class="ic" width=${w} height=${h} viewBox="0 0 ${w} ${h}">${art}</svg>`;
};

const base = css`
  *, *::before, *::after { box-sizing: border-box; }
  :host { display: block; }
  svg.ic { display: block; flex: none; }
`;

@customElement("ribbon-bar")
class RibbonBar extends LitElement {
  static styles = [base, css`
    :host { height: 96px; display: grid; grid-template-columns: 353px 171px 155px 149px 146px 367px 81px 97px 86px 1fr; background: #fafafa; border-bottom: 1px solid #c8c8d4; padding-top: 2px; }
    .group { display: grid; grid-template-rows: 72px 20px; border-right: 1px solid #cfcfdd; margin-bottom: 1px; position: relative; padding-top: 2px; }
    .body { display: grid; align-items: center; white-space: nowrap; }
    .r3 { grid-template-rows: 22px 22px 22px; height: 66px; align-content: start; }
    .name { text-align: center; line-height: 20px; padding-top: 1px; }
    .name.wide { padding-left: 4px; }
    .name.launch { padding-right: 17px; }
    .name svg { position: absolute; right: 5px; bottom: 5px; }
    .mid { justify-self: center; }
    .big { grid-row: 1 / 4; grid-column: 1; align-self: start; display: flex; flex-direction: column; align-items: center; text-align: center; line-height: 12px; padding-top: 3px; }
    .pic { height: 32px; display: grid; place-items: center; margin-bottom: 5px; }
    .drop .pic { margin-bottom: 2px; }
    .drop svg:last-child { margin-top: 4px; }
    .attrs { padding: 10px 0 0 6px; display: flex; flex-direction: column; gap: 7px; }
    .line { display: flex; gap: 3px; align-items: center; }
    .line > svg { margin: 0 3px 0 3px; }
    .combo { height: 22px; border: 1px solid #a9bfdf; background: #fcfcfc; display: flex; align-items: center; padding: 0 5px 0 3px; gap: 6px; }
    .combo span { flex: 1; }
    .combo svg:last-child { margin-top: -4px; }
    .w140 { width: 140px; } .w174 { width: 174px; } .w72 { width: 72px; } .w62 { width: 62px; gap: 4px; padding-left: 2px; }
    .dim { color: #999; }
    .primary { grid-template-columns: 56px 18px 18px 16px 16px 45px; }
    .primary .big { width: 59px; }
    .popset { grid-row: 1 / 4; grid-column: 6; align-self: start; width: 44px; height: 71px; background: #cadcf2; border: 1px solid #b6cae6; display: flex; flex-direction: column; align-items: center; padding-top: 5px; gap: 4px; line-height: 15px; }
    .selection { grid-template-columns: 60px 19px 16px 20px 22px 16px; }
    .selection .big { width: 63px; }
    .camera { grid-template-columns: 54px 20px 1fr; }
    .camera .big { width: 56px; }
    .lighting { grid-template-columns: 49px 20px 1fr; }
    .lighting .big { width: 51px; }
    .txt { display: flex; align-items: center; gap: 8px; }
    .materials { grid-template-columns: 7px 21px 62px 200px 75px; padding-top: 2px; }
    .materials .big { margin-top: -2px; grid-column: 5; }
    .gallery { grid-row: 1 / 4; grid-column: 4; align-self: start; height: 67px; border: 1px solid #c4c4d6; background: #fff; display: grid; grid-template-columns: 1fr 15px; }
    .gbtns { display: grid; grid-template-rows: 1fr 1fr 1fr; border-left: 1px solid #c4c4d6; }
    .gbtns div { display: grid; place-items: center; border-bottom: 1px solid #c4c4d6; }
    .gbtns div:last-child { border: 0; }
    .rendering { grid-template-columns: 54px 1fr; }
    .rendering .big { width: 60px; }
    .utilities { grid-template-columns: 58px 20px 1fr; padding-left: 2px; }
    .utilities > .mid { margin-left: -5px; }
    .lumen { grid-template-columns: 64px 1fr; }
    .lumen > svg { margin-left: -2px; }
  `];
  private combo(cls: string, text: string, icon = "", dim = false) {
    return html`<div class="combo ${cls}">${icon ? ic(icon) : ""}<span class=${dim ? "dim" : ""}>${text}</span>${ic(dim ? "downL" : "down")}</div>`;
  }
  private big(icon: string, text: unknown, drop = false) {
    return html`<div class="big ${drop ? "drop" : ""}"><div class="pic">${ic(icon)}</div><div>${text}</div>${drop ? ic("down") : ""}</div>`;
  }
  private txt(t: string, drop = false) {
    return html`<div class="txt">${t}${drop ? ic("down") : ""}</div>`;
  }
  private mid(n: string) { return html`<div class="mid">${ic(n)}</div>`; }
  render() {
    const e = html`<i></i>`;
    return html`
      <div class="group"><div class="attrs">
        <div class="line">${ic("level")}${this.combo("w140", "None")}${this.combo("w174", "Default")}</div>
        <div class="line">${this.combo("w72", "0", "color")}${this.combo("w72", "0", "style")}${this.combo("w62", "0", "weight")}${this.combo("w62", "0", "mat")}${this.combo("w62", "0", "prio", true)}</div>
      </div><div class="name wide">Attributes</div></div>
      <div class="group"><div class="body r3 primary">
        ${this.big("explorer", "Explorer")}${this.mid("doc")}${this.mid("down")}${this.mid("levinfo")}${e}
        <div class="popset">${ic("sphere")}PopSet</div>
        ${this.mid("cube")}${e}${this.mid("info")}${e}
        ${this.mid("layers")}${e}${this.mid("keys")}${this.mid("down")}
      </div><div class="name">Primary</div></div>
      <div class="group"><div class="body r3 selection">
        ${this.big("arrowBig", html`Element<br>Selection`)}
        ${this.mid("selAll")}${e}${this.mid("lockSel")}${this.mid("cut")}${e}
        ${this.mid("selNone")}${e}${this.mid("unlockSel")}${this.mid("copy")}${e}
        ${this.mid("marquee")}${this.mid("down")}${this.mid("replace")}${this.mid("paste")}${this.mid("down")}
      </div><div class="name">Selection</div></div>
      <div class="group"><div class="body r3 camera">
        ${this.big("camera", html`Place<br>Camera`)}
        ${ic("camEdit")}${this.txt("Edit", true)}${ic("lens")}${this.txt("Lens", true)}${ic("photo")}${this.txt("Photomatch")}
      </div><div class="name">Camera</div></div>
      <div class="group"><div class="body r3 lighting">
        ${this.big("lights", "Lights", true)}
        ${ic("manage")}${this.txt("Manage")}${ic("solar")}${this.txt("Solar Path")}${ic("env")}${this.txt("Environment")}
      </div><div class="name launch">Lighting${ic("launcher")}</div></div>
      <div class="group"><div class="body r3 materials">
        ${e}${ic("apply")}${this.txt("Apply", true)}
        <div class="gallery"><div></div><div class="gbtns"><div>${ic("up")}</div><div>${ic("downB")}</div><div>${ic("more")}</div></div></div>
        ${this.big("proj", "Projections", true)}
        ${e}${ic("remove")}${this.txt("Remove", true)}
        ${e}${ic("brushes")}${this.txt("Edit", true)}
      </div><div class="name launch">Materials${ic("launcher")}</div></div>
      <div class="group"><div class="body r3 rendering">
        ${this.big("render", html`Render<br>Scene`)}
        ${ic("saveImg")}${ic("saveImgs")}${ic("renderBox")}
      </div><div class="name launch">Rendering${ic("launcher")}</div></div>
      <div class="group"><div class="body r3 utilities">
        ${this.big("target", "Populate")}${this.mid("stamp")}${this.mid("down")}${this.mid("xform")}${this.mid("down")}
      </div><div class="name">Utilities</div></div>
      <div class="group"><div class="body r3 lumen">
        ${this.big("lumen", "LumenRT")}${ic("lumenS")}
      </div><div class="name">LumenRT</div></div>`;
  }
}

@customElement("view-frame")
class ViewFrame extends LitElement {
  @property() heading = "";
  @property({ type: Boolean, reflect: true }) active = false;
  static styles = [base, css`
    :host { border: 1px solid #444; border-radius: 6px 6px 0 0; background: #d7e4f2; padding: 0 7px 6px; display: grid; grid-template-rows: 30px 24px 1fr; background: linear-gradient(#bfcddb, #d7e4f2 30px); color: #8c8c8c; overflow: hidden; }
    :host([active]) { background: linear-gradient(#99b4d1, #b9d1ea 30px); border-color: #000; box-shadow: inset -1px -1px #28d0e8, inset 1px 1px #d4e2f0; color: #222; padding-right: 6px; }
    .title { display: flex; align-items: center; padding: 6px 3px 0 2px; gap: 6px; }
    .title span { flex: 1; }
    .win { width: 32px; height: 18px; margin-left: -4px; border: 1px solid #8592b0; border-radius: 2px; display: grid; place-items: center; background: #c8d6e6; box-shadow: inset 0 0 0 1px #dbe6f2; }
    :host([active]) .win { background: linear-gradient(#c3d4e7 48%, #9db8d4 50%, #b4cde6); border-color: #5c6c88; box-shadow: inset 0 0 0 1px #cddcec; }
    :host([active]) .win.x { background: linear-gradient(#dc9a8e 45%, #b8422c 50%, #cc6a54); border-color: #5a1c1c; box-shadow: inset 0 0 0 1px #dca498; }
    .bar { background: #f0f0f0; display: grid; align-items: center; justify-items: center; justify-content: start; grid-template-columns: 24px 13px 24px 22px 13px 26px 9px 11px 18px 24px 22px 22px 22px 22px 22px 6px 22px 22px 22px 22px 22px 6px 22px 22px 22px 22px; }
    .sep { width: 1px; height: 21px; background: #9a9a9a; }
    .canvas { background: #fff; overflow: hidden; }
  `];
  render() {
    const items = ["vinfo", "downB", "display", "sun", "downB", "bing", "downB", "|", "brush", "zin", "zout", "zwin", "fit", "rotate", "hand", "|", "feet", "fly", "navwin", "prev", "next", "|", "copyview", "clip", "clipV", "clipM"];
    return html`
      <div class="title">${ic("view")}<span>${this.heading}</span>
        <div class="win">${ic("wmin")}</div><div class="win">${ic("wmax")}</div><div class="win x">${ic("wx")}</div></div>
      <div class="bar">${items.map(i => i === "|" ? html`<div class="sep"></div>` : ic(i))}</div>
      <div class="canvas"><slot></slot></div>`;
  }
}

/* Line segments of a pixel-style pointing hand */
const handLeft = svg`<g transform="translate(480 430) scale(.33333)">
  <path d="M124 742L112 752 113 768 160 828 130 824 118 838 118 850 130 860 160 862 168 874 215 880 275 832 266 820 270 800 262 795 266 785 236 744 222 742 210 750 195 748 162 775 140 746Z" fill="#fff"/>
  <path d="M112 752L124 744M138 746L178 796M162 775L198 746M190 757L203 777M209 750L222 742M209 750L220 764M236 744L266 785M260 795L270 808M265 822L275 830M112 768L165 832M143 830L157 824M134 826L120 837M118 849L129 860M142 860L145 862M160 862L168 874M182 874L185 875M197 876L200 877" stroke="#000" stroke-width="9" stroke-linecap="square" fill="none"/>
  <path d="M215 880L275 832 298 858 236 907Z" fill="#f00" stroke="#000" stroke-width="9"/></g>`;
const handRight = svg`<g transform="translate(1180 500) scale(.33333)">
  <path d="M117 200L121 185 125 170 137 162 141 148 146 132 156 124 172 130 178 142 180 160 244 130 256 138 262 150 255 160 228 178 240 210 245 240 242 257 196 281 160 275 145 283 108 212Z" fill="#fff"/>
  <path d="M116 199L118 199M121 184L122 182M125 169L137 163M140 149L142 146M146 132L158 125M169 129L178 143M170 155L172 162M165 172L242 131M253 135L261 149M254 161L201 189M226 180L245 218M215 218L235 208M225 239L240 232 245 241M240 257L198 280M171 280L186 274M150 278L160 275" stroke="#000" stroke-width="8" stroke-linecap="square" fill="none"/>
  <path d="M81 229L112 212 147 282 118 298Z" fill="#f00" stroke="#000" stroke-width="8"/></g>`;

@customElement("scene-iso")
class SceneIso extends LitElement {
  static styles = [base, css`svg { display: block; }`];
  render() {
    const dots = [[655, 58], [601, 118], [547, 178], [490, 238], [433, 301], [376, 364], [319, 427], [259, 490], [199, 556], [139, 619], [82, 721]];
    return html`<svg width="1129" height="808" viewBox="9 199 1129 808">
      <rect x="9" y="373" width="1129" height="634" fill="#e1e1e1"/>
      ${dots.map(([x, y]) => svg`<rect x=${480 + Math.floor(x / 3)} y=${430 + Math.floor(y / 3)} width="1" height="1" fill="#000"/>`)}
      <path d="M505 657h2v1h1v2h-2v-1h-1z" fill="#e000e0"/>
      ${handLeft}</svg>`;
  }
}

@customElement("scene-top")
class SceneTop extends LitElement {
  static styles = [base, css`
    svg { display: block; }
    .axis { font: 28px "Open Sans", sans-serif; fill: #222; text-anchor: middle; }
  `];
  render() {
    const vx = Array.from({ length: 21 }, (_, i) => Math.floor(1283.7 + 36.72 * (i - 3)));
    const hy = Array.from({ length: 23 }, (_, i) => Math.round(824 + 36.72 * (i - 17)));
    return html`<svg width="756" height="808" viewBox="1153 199 756 808">
      <defs>
        <linearGradient id="r3" gradientUnits="userSpaceOnUse" x1="0" y1="298" x2="0" y2="564"><stop offset="0" stop-color="#d800d8"/><stop offset=".1" stop-color="#f800f8"/><stop offset=".42" stop-color="#e800e8"/><stop offset=".54" stop-color="#c000c0"/><stop offset=".68" stop-color="#780078"/><stop offset=".82" stop-color="#180018"/><stop offset=".9" stop-color="#000"/></linearGradient>
        <linearGradient id="r1" gradientUnits="userSpaceOnUse" x1="1365" y1="500" x2="1590" y2="400"><stop offset="0" stop-color="#b800b8"/><stop offset=".12" stop-color="#c800c8"/><stop offset=".35" stop-color="#ee00ee"/><stop offset=".75" stop-color="#e600e6"/><stop offset="1" stop-color="#d400d4"/></linearGradient>
        <linearGradient id="r2" gradientUnits="userSpaceOnUse" x1="0" y1="370" x2="0" y2="637"><stop offset="0" stop-color="#d000d0"/><stop offset=".04" stop-color="#f400f4"/><stop offset=".5" stop-color="#f200f2"/><stop offset=".75" stop-color="#c400c4"/><stop offset=".86" stop-color="#dc00dc"/><stop offset="1" stop-color="#f400f4"/></linearGradient>
        <linearGradient id="cr" x1="0" x2="1"><stop offset="0" stop-color="#b000b0"/><stop offset=".07" stop-color="#d800d8"/><stop offset=".16" stop-color="#ff00ff"/></linearGradient>
      </defs>
      <g shape-rendering="crispEdges" fill="#b6b6b6">
        ${vx.map(x => svg`<rect x=${x} y="199" width="1" height="808"/>`)}
        ${hy.map(y => svg`<rect x="1153" y=${y} width="756" height="1"/>`)}
      </g>
      <rect x="1282" y="274" width="627" height="551" fill="#ff33ff"/>
      <path d="M1282.500 274V825.500H1484.500V839.500H1604L1606 825.500H1909" fill="none" stroke="#f0f"/>
      <path d="M1485 824h121l-2 15h-119z" fill="#ff33ff"/>
      <path d="M1282 274.500h627" stroke="#b000b0"/><path d="M1282 274h627" stroke="#500050" stroke-dasharray="3 31.800"/>
      <path d="M1505 199C1508 225 1516 250 1534 266 1558 286 1590 293 1621 293 1655 292 1690 281 1716 268 1745 249 1764 226 1769 199H1747C1724 228 1684 237 1641 237.500 1590 236 1550 222 1525 199Z" fill="url(#cr)"/>
      <g fill="none" stroke="#f000f0" stroke-width="1">
        <path d="M1615 340A165.920 165.920 0 1 0 1356.300 547.300A124.800 124.800 0 0 1 1566 581A139.500 139.500 0 0 0 1619 530A137 137 0 1 0 1615 340"/>
        <path d="M1429 506C1429 545 1432 565 1438 603S1473 672 1473 672 1487 687 1493 697 1501 714 1500 727 1492 785 1488 803L1484.700 825M1536 539C1532 560 1532 575 1540 594L1562 621C1575 637 1585 655 1592 670 1614 725 1616 770 1604 839"/>
      </g>
      <path fill-rule="evenodd" fill="url(#r1)" d="M1365 460a133 133 0 1 0 266 0a133 133 0 1 0-266 0ZM1375 461.500a126.500 125.600 0 1 0 253 0a126.500 125.600 0 1 0-253 0Z"/>
      <path d="M1430 347A133 133 0 0 1 1631 460" fill="none" stroke="#c400c4"/>
      <path d="M1400.500 379C1384 403 1376 430 1375 461" fill="none" stroke="#500050"/>
      <path d="M1370.500 498A133 133 0 0 0 1420 567" fill="none" stroke="#300030" stroke-dasharray="3 1.500"/>
      <path d="M1616.500 520A133 133 0 0 1 1536 587.500" fill="none" stroke="#900090" stroke-dasharray="4 2"/>
      <path d="M1717 298A133 133 0 0 0 1717 564V560.500A122.500 129 0 0 1 1717 302Z" fill="url(#r3)"/>
      <g fill="none">
        <path d="M1717 299.500A132 132 0 0 1 1762 307" stroke="#e000e0" stroke-width="3"/>
        <path d="M1759 306.700C1812 327 1841 370 1847 419" stroke="#200020" stroke-width="1.200"/>
        <path d="M1848 405A131.500 131.500 0 0 1 1775 548" stroke="#cc00cc" stroke-width="2.800"/>
        <path d="M1716 562.300C1750 563 1782 551 1806 529" stroke="#300030" stroke-width="1.600"/>
        <path d="M1849.500 400A134 134 0 0 1 1849 462" stroke="#a000a0" stroke-width=".8"/>
      </g>
      <path fill-rule="evenodd" fill="url(#r2)" d="M1404.500 503a133 133.500 0 1 0 266 0a133 133.500 0 1 0-266 0ZM1415 502a126.500 121 0 1 0 253 0a126.500 121 0 1 0-253 0Z"/>
      <path d="M1421 567C1440 601 1466 622 1504 632.500C1470 623 1446 602 1424 566Z" fill="#100010" stroke="#100010" stroke-width=".5"/>
      <path d="M1665 465A133 133 0 0 1 1670 520" fill="none" stroke="#a000a0"/>
      ${handRight}
      <g transform="translate(1180 500) scale(.33333)" stroke-width="3">
        <path d="M312 748L382 836 347 822V919H274V822L241 836Z" fill="#00ff00" fill-opacity=".4" stroke="#0e2"/>
        <path d="M364 937H464L448 902 536 972 448 1042 464 1009H364Z" fill="#be0000" fill-opacity=".4" stroke="#f22"/>
        <circle cx="312" cy="972" r="36" fill="#00f" fill-opacity=".4" stroke="#22f"/><circle cx="312" cy="972" r="8" fill="#00f"/>
      </g>
      <text class="axis" x="1284" y="795">Y</text>
      <text class="axis" transform="translate(1313 824) rotate(90)">X</text>
    </svg>`;
  }
}

@customElement("app-root")
class AppRoot extends LitElement {
  static styles = [base, css`
    :host { width: 1920px; height: 1080px; overflow: hidden; font: 12px "Open Sans", "Noto Sans", sans-serif; letter-spacing: -.35px; color: #222; background: #f0f0f0; border-top: 1px solid #444; border-left: 1px solid #0078d7; border-right: 1px solid #0078d7; display: grid; grid-template-columns: 1918px; grid-template-rows: 25px 22px 96px 871px 33px 32px; white-space: nowrap; }
    .top { display: grid; grid-template-columns: 433px 1120px 1fr; }
    .qat { display: grid; align-items: center; justify-items: center; grid-template-columns: 2px 16px 9px 160px 2px 21px 13px 22px 22px 22px 22px 23px 12px 23px 22px 20px 22px; padding-bottom: 1px; }
    .vs { width: 1px; height: 16px; background: #ccc; }
    .flow { width: 160px; height: 22px; border: 1px solid #ccccdc; background: #eeeef2; display: flex; align-items: center; justify-content: space-between; padding: 0 3px 0 3px; }
    .caption { padding-left: 191px; text-align: center; line-height: 24px; letter-spacing: -.25px; }
    .right { display: grid; align-items: center; justify-items: center; grid-template-columns: 192px 31px 25px 12px 24px 13px 30px 16px 23px; padding-bottom: 2px; }
    .find { width: 192px; height: 22px; border: 1px solid #a8a8a8; background: #fff; display: grid; grid-template-columns: 1fr 24px 16px; align-items: center; justify-items: start; padding-left: 6px; font-style: italic; color: #777; letter-spacing: -.2px; }
    .find span { margin-top: -4px; }
    .find .dd { height: 20px; border-left: 1px solid #a8a8a8; display: grid; place-items: center; width: 17px; }
    .q { width: 22px; height: 22px; border: 2px solid #2b98d0; border-radius: 50%; color: #2b98d0; font: bold 15px/18px "Open Sans", sans-serif; text-align: center; }
    .eo { width: 20px; height: 20px; border-radius: 50%; background: #2b98d0; color: #fff; line-height: 20px; text-align: center; }
    .tabs { display: flex; line-height: 23px; border-bottom: 1px solid #c8c8d4; padding-right: 8px; letter-spacing: -.1px; }
    .tab { text-align: center; }
    .file { width: 46px; background: #0078d0; color: #fff; margin-right: 2px; }
    .home { width: 59px; background: #fafafa; border: 1px solid #c8c8d4; border-bottom: 0; height: 23px; margin-right: 10px; line-height: 22px; z-index: 1; }
    .t3 { width: 37px; margin-right: 12px; } .t4 { width: 68px; margin-right: 9px; } .t5 { width: 85px; margin-right: 12px; letter-spacing: -.15px; } .t6 { width: 82px; margin-right: 9px; letter-spacing: -.2px; } .t7 { width: 44px; }
    .fold { margin: 8px 0 0 auto; }
    ribbon-bar { margin-right: 2px; }
    .mdi { display: grid; grid-template-columns: 1144px 772px; background: #a9a9a9; border-bottom: 1px solid #d5d5d5; }
    .tools { display: flex; background: #d5d5d5; }
    .strip { background: #f0f0f0; border-radius: 3px; display: grid; align-items: center; height: 33px; margin-right: 1px; justify-items: center; padding-top: 1px; }
    .nav { width: 459px; grid-template-columns: 9px 26px 16px 29px 14px 29px 14px 151px 4px 30px 4px 133px; }
    .grip { width: 2px; height: 20px; background: repeating-linear-gradient(#a8a8a8 0 2px, transparent 2px 4px); }
    .sep { width: 1px; height: 27px; background: #a0a0a0; }
    .model { width: 148px; height: 21px; background: #e1e1e1; border: 1px solid #adadad; display: flex; align-items: center; padding: 0 5px 0 1px; gap: 5px; color: #000; }
    .model span { width: 107px; overflow: hidden; letter-spacing: -.2px; }
    .views { display: flex; gap: 2px; justify-self: start; margin-left: 2px; }
    .views div { width: 14px; height: 20px; text-align: center; box-shadow: 1px 0 #111; border: 1px solid #d8d8d8; background: #f3f3f3; color: #000; letter-spacing: 0; line-height: 18px; }
    .views div.on { background: #7cb2e2; border-color: #3a76c4; }
    .views div:last-child { box-shadow: 1px 0 #aaa; }
    .coords { width: 407px; grid-template-columns: 8px 20px 105px 10px 20px 105px 10px 20px 105px; justify-content: start; }
    .ax { font-weight: 700; font-size: 16px; color: #000; padding-right: 4px; }
    .coord { width: 105px; height: 20px; border: 1px solid #a8a8b4; background: #fff; color: #777; line-height: 18px; padding-left: 5px; font-size: 11px; letter-spacing: -.12px; }
    .snaps { width: 302px; grid-template-columns: 8px 28px 6px 28px 28px 28px 28px 28px 28px 28px 28px 5px 28px; }
    .snap0 { width: 28px; height: 29px; background: #7cb2e2; border: 1px solid #2a66c4; display: grid; place-items: center; }
    .status { display: grid; grid-template-columns: 292px 4px 5px 25px 977px 29px 30px 133px 30px 88px 30px 30px 30px 30px 30px 30px 30px 30px 30px 34px; align-items: center; color: #000; }
    .status > * { height: 28px; display: flex; align-items: center; padding-left: 8px; margin-top: -2px; }
    .status > .b { border-left: 1px solid #777; height: 23px; }
    .status > .m { padding-left: 3px; letter-spacing: -.3px; }
    .status > .n { padding-left: 4px; }
    .status > .z { padding-left: 0; }
    .status > .s { padding-left: 5px; }
    .status > .corner { padding: 0; align-items: start; height: 22px; border-right: 1px solid #777; justify-content: end; }
  `];
  render() {
    const qat = ["v8", "down", "folder", "save", "saveSet", "zip", "undo", "down", "redo", "pin", "print", "more"];
    return html`
      <div class="top">
        <div class="qat"><i></i>${ic("logo")}<div class="vs"></div><div class="flow">Visualization${ic("down")}</div><i></i>${qat.map(ic)}</div>
        <div class="caption">EdTemplate.dgn [3D - V8 DGN] - MicroStation</div>
        <div class="right"><div class="find"><span>Search Ribbon (F4)</span>${ic("search")}<div class="dd">${ic("down")}</div></div>
          ${ic("bell")}<div class="q">?</div>${ic("down")}<div class="eo">EO</div>${ic("down")}${ic("min")}${ic("restore")}${ic("close")}</div>
      </div>
      <div class="tabs"><div class="tab file">File</div><div class="tab home">Home</div><div class="tab t3">View</div><div class="tab t4">Animate</div><div class="tab t5">Drawing Aids</div><div class="tab t6">Collaborate</div><div class="tab t7">Help</div><div class="fold">${ic("chev")}</div></div>
      <ribbon-bar></ribbon-bar>
      <div class="mdi">
        <view-frame active heading="View 1, 3D Metric Design"><scene-iso></scene-iso></view-frame>
        <view-frame heading="View 2 - Top, 3D Metric Design"><scene-top></scene-top></view-frame>
      </div>
      <div class="tools">
        <div class="strip nav"><div class="grip"></div>${ic("back")}${ic("downB")}${ic("fwd")}${ic("down")}${ic("disc")}${ic("downB")}
          <div class="model">${ic("models")}<span>3D Metric Design Model</span>${ic("downB")}</div><div class="sep"></div>${ic("modelsL")}<div class="sep"></div>
          <div class="views">${[1, 2, 3, 4, 5, 6, 7, 8].map(n => html`<div class=${n < 3 ? "on" : ""}>${n}</div>`)}</div></div>
        <div class="strip coords"><div class="grip"></div><div class="ax">X</div><div class="coord">-698720.488</div><div class="sep"></div><div class="ax">Y</div><div class="coord">-1012490.407</div><div class="sep"></div><div class="ax">Z</div><div class="coord">1200785.057</div></div>
        <div class="strip snaps"><div class="grip"></div><div class="snap0">${ic("xOn")}</div><div class="sep"></div>${["s1", "s2", "s3", "s4", "s5", "s6", "s7", "s8"].map(ic)}<div class="sep"></div>${ic("s9")}</div>
      </div>
      <div class="status">
        <div class="m">Element Selection &gt; Identify element to add to set</div><div class="z"><div class="grip"></div></div><div class="b"></div><div class="corner">${ic("up")}</div><div></div>
        <div class="b">${ic("snap")}</div><div class="b">${ic("lock")}</div><div class="b n">Default</div>
        <div class="b">&nbsp;${ic("arrow")}</div><div class="s">: 69</div>
        <div class="b"></div><div class="b"></div><div class="b">${ic("save")}</div><div class="b">${ic("scroll")}</div><div class="b"></div><div class="b"></div><div class="b">${ic("note")}</div><div class="b"></div><div class="b">${ic("shield")}</div><div class="b">${ic("globe")}</div>
      </div>`;
  }
}
